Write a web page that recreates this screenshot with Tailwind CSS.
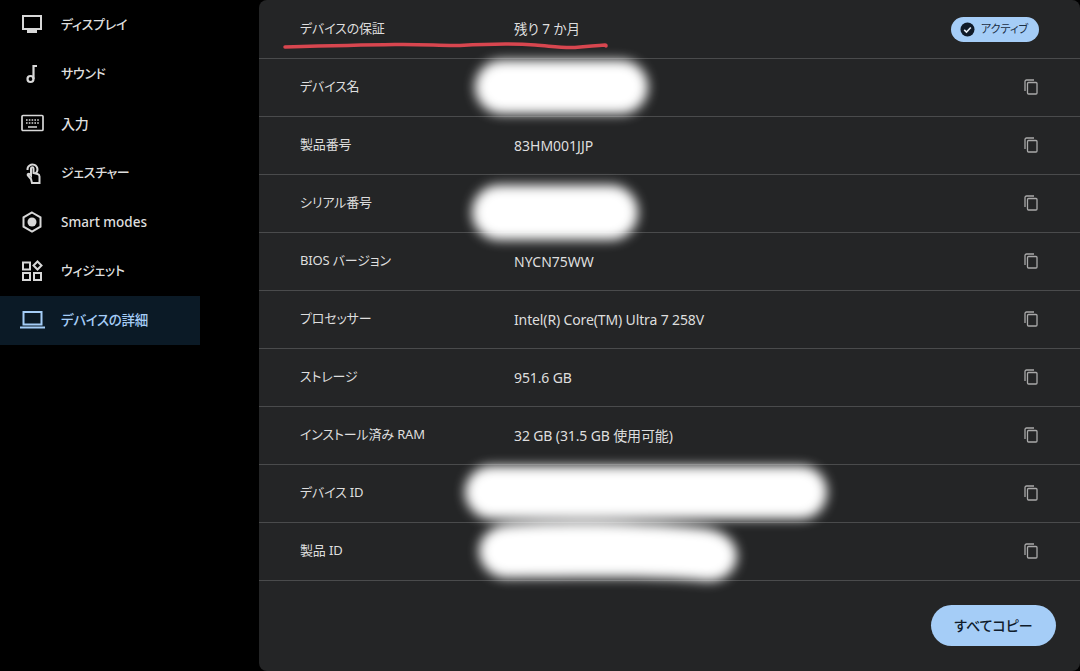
<!DOCTYPE html>
<html lang="ja">
<head>
<meta charset="UTF-8" />
<title>デバイスの詳細</title>
<script src="https://cdn.jsdelivr.net/npm/@tailwindcss/browser@4"></script>
</head>
<body class="h-[671px] w-[1080px] overflow-hidden bg-black font-['Noto_Sans','Noto_Sans_CJK_JP',sans-serif] [font-feature-settings:'palt'] text-[14px] text-[#dedede]">
<div class="flex h-full">
  <!-- sidebar -->
  <nav class="w-[259px] shrink-0 flex flex-col font-medium text-[13px] tracking-[-0.3px]">
    <div class="h-[49.3px] flex items-center w-[200px]">
      <svg class="ml-[21px] w-[22px] h-[22px]" viewBox="0 0 22 22" fill="none" stroke="#d8d8d8" stroke-width="2"><rect x="2" y="2" width="18" height="13"/><path d="M6 17.500h10" stroke-width="3"/></svg>
      <span class="ml-[18px]">ディスプレイ</span>
    </div>
    <div class="h-[49.3px] flex items-center w-[200px]">
      <svg class="ml-[21px] w-[22px] h-[22px]" viewBox="0 0 22 22" fill="none" stroke="#d8d8d8" stroke-width="2.200"><circle cx="9.500" cy="16" r="3"/><path d="M12.500 16V3h3.500" /></svg>
      <span class="ml-[18px]">サウンド</span>
    </div>
    <div class="h-[49.3px] flex items-center w-[200px]">
      <svg class="ml-[21px] w-[23px] h-[22px]" viewBox="0 0 23 22" fill="none" stroke="#d8d8d8" stroke-width="1.700"><rect x="1" y="3.500" width="21" height="15" rx="1"/><path d="M5 8h13M5 11h13" stroke-dasharray="1.600 1.200" stroke-width="1.500"/><path d="M7 15h9" stroke-width="1.500"/></svg>
      <span class="ml-[17px] text-[14px]">入力</span>
    </div>
    <div class="h-[49.3px] flex items-center w-[200px]">
      <svg class="ml-[21px] w-[22px] h-[24px]" viewBox="0 0 22 24" fill="none" stroke="#d8d8d8" stroke-width="2"><path d="M6.500 9a5 5 0 1 1 8 3.500"/><path d="M10 18l-3-3.500c-1-1 .5-2.500 1.700-1.300l1.300 1.300V7.500c0-1.700 2.500-1.700 2.500 0V12l4 1c1.300.4 2 1.300 2 2.500V22H11z"/></svg>
      <span class="ml-[18px]">ジェスチャー</span>
    </div>
    <div class="h-[49.3px] flex items-center w-[200px]">
      <svg class="ml-[21px] w-[22px] h-[22px]" viewBox="0 0 22 22" fill="none" stroke="#d8d8d8" stroke-width="2"><path d="M11 1.500l8.500 4.800v9.400L11 20.500l-8.500-4.800V6.300z"/><circle cx="11" cy="11" r="4.500" fill="#d8d8d8" stroke="none"/></svg>
      <span class="ml-[18px] text-[13.5px] tracking-normal">Smart modes</span>
    </div>
    <div class="h-[49.3px] flex items-center w-[200px]">
      <svg class="ml-[21px] w-[22px] h-[22px]" viewBox="0 0 22 22" fill="none" stroke="#d8d8d8" stroke-width="2"><rect x="2" y="2.500" width="7" height="7"/><rect x="2" y="13" width="7" height="7"/><rect x="13" y="13" width="7" height="7"/><path d="M16.500 1.500l4 4-4 4-4-4z"/></svg>
      <span class="ml-[18px]">ウィジェット</span>
    </div>
    <div class="h-[49.3px] flex items-center w-[200px] bg-[#0b1a26] text-[#a5cdf7]">
      <svg class="ml-[20px] w-[25px] h-[22px]" viewBox="0 0 25 22" fill="none" stroke="#a5cdf7" stroke-width="2"><rect x="3.500" y="3" width="18" height="12.500"/><path d="M0 18.500h25"/></svg>
      <span class="ml-[16px] text-[13.5px]">デバイスの詳細</span>
    </div>
  </nav>

  <!-- details panel -->
  <main class="relative flex-1 h-full pt-[1px] bg-[#242526] rounded-[8px]">
    <div class="flex items-center h-[58px] pb-[1px] border-b border-[#4a4b4c] pl-[41px] pr-[41px]">
      <span class="w-[214px] text-[13px] tracking-[-0.15px]">デバイスの保証</span>
      <span class="flex-1 text-[13.500px]">残り 7 か月</span>
      <span class="flex items-center w-[88px] h-[25px] rounded-full bg-[#a5cdf7] text-[#1c2f44] text-[11px] pl-[9px] gap-[6px]">
        <svg class="w-[15px] h-[15px]" viewBox="0 0 15 15"><circle cx="7.500" cy="7.500" r="7" fill="#101a28"/><path d="M4.200 7.800l2.300 2.200 4.300-4.500" fill="none" stroke="#e8eef5" stroke-width="1.600"/></svg>
        アクティブ
      </span>
    </div>
    <div class="flex items-center h-[58px] pb-[1px] border-b border-[#4a4b4c] pl-[41px] pr-[42px]">
      <span class="w-[214px] text-[13px] tracking-[-0.15px]">デバイス名</span>
      <span class="flex-1"></span>
      <svg class="w-[14px] h-[16px]" viewBox="0 0 14 16" fill="none" stroke="#a9a9a9" stroke-width="1.300"><path d="M1 12V2.500A1.500 1.500 0 0 1 2.500 1H10"/><rect x="3.500" y="3.500" width="9.500" height="11.500" rx="1"/></svg>
    </div>
    <div class="flex items-center h-[58px] pb-[1px] border-b border-[#4a4b4c] pl-[41px] pr-[42px]">
      <span class="w-[214px] text-[13px] tracking-[-0.15px]">製品番号</span>
      <span class="flex-1">83HM001JJP</span>
      <svg class="w-[14px] h-[16px]" viewBox="0 0 14 16" fill="none" stroke="#a9a9a9" stroke-width="1.300"><path d="M1 12V2.500A1.500 1.500 0 0 1 2.500 1H10"/><rect x="3.500" y="3.500" width="9.500" height="11.500" rx="1"/></svg>
    </div>
    <div class="flex items-center h-[58px] pb-[1px] border-b border-[#4a4b4c] pl-[41px] pr-[42px]">
      <span class="w-[214px] text-[13px] tracking-[-0.15px]">シリアル番号</span>
      <span class="flex-1"></span>
      <svg class="w-[14px] h-[16px]" viewBox="0 0 14 16" fill="none" stroke="#a9a9a9" stroke-width="1.300"><path d="M1 12V2.500A1.500 1.500 0 0 1 2.500 1H10"/><rect x="3.500" y="3.500" width="9.500" height="11.500" rx="1"/></svg>
    </div>
    <div class="flex items-center h-[58px] pb-[1px] border-b border-[#4a4b4c] pl-[41px] pr-[42px]">
      <span class="w-[214px] text-[13px] tracking-[-0.15px]">BIOS バージョン</span>
      <span class="flex-1">NYCN75WW</span>
      <svg class="w-[14px] h-[16px]" viewBox="0 0 14 16" fill="none" stroke="#a9a9a9" stroke-width="1.300"><path d="M1 12V2.500A1.500 1.500 0 0 1 2.500 1H10"/><rect x="3.500" y="3.500" width="9.500" height="11.500" rx="1"/></svg>
    </div>
    <div class="flex items-center h-[58px] pb-[1px] border-b border-[#4a4b4c] pl-[41px] pr-[42px]">
      <span class="w-[214px] text-[13px] tracking-[-0.15px]">プロセッサー</span>
      <span class="flex-1 tracking-[-0.13px]">Intel(R) Core(TM) Ultra 7 258V</span>
      <svg class="w-[14px] h-[16px]" viewBox="0 0 14 16" fill="none" stroke="#a9a9a9" stroke-width="1.300"><path d="M1 12V2.500A1.500 1.500 0 0 1 2.500 1H10"/><rect x="3.500" y="3.500" width="9.500" height="11.500" rx="1"/></svg>
    </div>
    <div class="flex items-center h-[58px] pb-[1px] border-b border-[#4a4b4c] pl-[41px] pr-[42px]">
      <span class="w-[214px] text-[13px] tracking-[-0.15px]">ストレージ</span>
      <span class="flex-1 tracking-[-0.13px]">951.6 GB</span>
      <svg class="w-[14px] h-[16px]" viewBox="0 0 14 16" fill="none" stroke="#a9a9a9" stroke-width="1.300"><path d="M1 12V2.500A1.500 1.500 0 0 1 2.500 1H10"/><rect x="3.500" y="3.500" width="9.500" height="11.500" rx="1"/></svg>
    </div>
    <div class="flex items-center h-[58px] pb-[1px] border-b border-[#4a4b4c] pl-[41px] pr-[42px]">
      <span class="w-[214px] text-[13px] tracking-[-0.15px]">インストール済み RAM</span>
      <span class="flex-1 tracking-[-0.13px]">32 GB (31.5 GB 使用可能)</span>
      <svg class="w-[14px] h-[16px]" viewBox="0 0 14 16" fill="none" stroke="#a9a9a9" stroke-width="1.300"><path d="M1 12V2.500A1.500 1.500 0 0 1 2.500 1H10"/><rect x="3.500" y="3.500" width="9.500" height="11.500" rx="1"/></svg>
    </div>
    <div class="flex items-center h-[58px] pb-[1px] border-b border-[#4a4b4c] pl-[41px] pr-[42px]">
      <span class="w-[214px] text-[13px] tracking-[-0.15px]">デバイス ID</span>
      <span class="flex-1"></span>
      <svg class="w-[14px] h-[16px]" viewBox="0 0 14 16" fill="none" stroke="#a9a9a9" stroke-width="1.300"><path d="M1 12V2.500A1.500 1.500 0 0 1 2.500 1H10"/><rect x="3.500" y="3.500" width="9.500" height="11.500" rx="1"/></svg>
    </div>
    <div class="flex items-center h-[58px] pb-[1px] border-b border-[#4a4b4c] pl-[41px] pr-[42px]">
      <span class="w-[214px] text-[13px] tracking-[-0.15px]">製品 ID</span>
      <span class="flex-1"></span>
      <svg class="w-[14px] h-[16px]" viewBox="0 0 14 16" fill="none" stroke="#a9a9a9" stroke-width="1.300"><path d="M1 12V2.500A1.500 1.500 0 0 1 2.500 1H10"/><rect x="3.500" y="3.500" width="9.500" height="11.500" rx="1"/></svg>
    </div>
    <div class="flex justify-end pt-[24px] pr-[24px]">
      <button class="w-[125px] h-[41px] rounded-full bg-[#a5cdf7] text-[#101c2c] font-medium text-[14px]">すべてコピー</button>
    </div>

    <!-- hand-drawn marks on top of the screenshot -->
    <svg class="absolute left-0 top-0 pointer-events-none" width="821" height="671" viewBox="0 0 821 671" fill="none">
      <path d="M26 47c35-1 70-2 110-2.500 30-.500 45 1.500 65 1 25-1.500 50-2.500 75-.5 15 1 25 3 40 2.500 15-1 20-2 30-2.500 1 0 1 1 1 1" stroke="#d8464f" stroke-width="3.500" stroke-linecap="round"/>
      <g fill="#fff" style="filter:blur(6px)">
        <rect x="216" y="60" width="173" height="54" rx="27"/>
        <rect x="213" y="185" width="166" height="55" rx="27"/>
        <path d="M232 466h310c16 0 26 13 26 26s-10 27-26 27H232c-14 0-26-13-26-27s12-26 26-26z"/>
        <path d="M248 525c60-4 140-2 195 3 24 2 35 15 35 28s-12 27-32 25c-50-5-130-3-198-3-16 0-28-13-28-27s12-25 28-26z"/>
      </g>
    </svg>
  </main>
</div>
</body>
</html>
